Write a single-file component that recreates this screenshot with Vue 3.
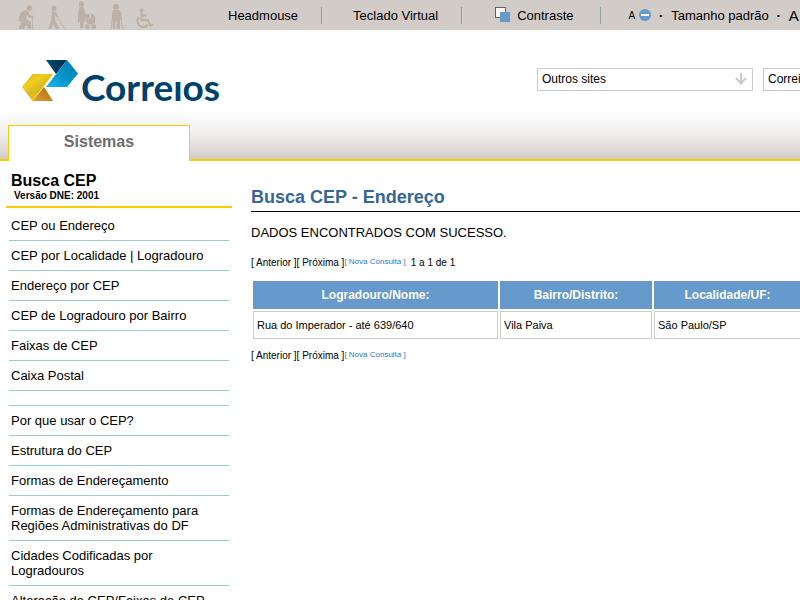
<script setup>
const searches = [
  'CEP ou Endereço',
  'CEP por Localidade | Logradouro',
  'Endereço por CEP',
  'CEP de Logradouro por Bairro',
  'Faixas de CEP',
  'Caixa Postal',
]
const guides = [
  'Por que usar o CEP?',
  'Estrutura do CEP',
  'Formas de Endereçamento',
  'Formas de Endereçamento para Regiões Administrativas do DF',
  'Cidades Codificadas por Logradouros',
  'Alteração de CEP/Faixas de CEP',
]
const rows = [['Rua do Imperador - até 639/640', 'Vila Paiva', 'São Paulo/SP']]
</script>

<template>
  <div class="page">
    <nav class="access" aria-label="Acessibilidade">
      <svg class="people" viewBox="0 0 138 30" width="138" height="30" aria-hidden="true">
        <g fill="#bbb1a7">
          <circle cx="11.300" cy="8" r="2.800" />
          <path d="M8 10 Q2 11 1 18 L0.500 21 L3.500 22 L1 27 V29 H6 L8 25 L9.500 26 V29 H13 V22 L8 19 L9 15 L11 18 L16 17.500 L15 15.500 L12 15.500 L10 11 Z" />
          <circle cx="36" cy="8.300" r="2.600" />
          <path d="M34 11 L38 12 L40 16.500 L38.500 17 L36.500 15 L37 20 L41.500 29 H37.500 L34.500 23.500 L34 29 H30 L33.500 19.500 Z" />
          <circle cx="63.500" cy="4" r="2.700" />
          <path d="M61.500 7 H65.500 L67.500 14 L67 22 H65.500 V28 H62 V22 H60 V13 Z" />
          <path d="M73 13.500 V18.500 H67.500 Q67.500 24 73 24.500 Q77.500 24 77.500 19 Q77 14 73 13.500 Z" />
          <path d="M67.500 18.500 V14.500 Q69 13.500 71 14 L72 17.500 Z" />
          <circle cx="69.300" cy="26.700" r="2.500" />
          <circle cx="75.600" cy="26.700" r="2.500" />
          <circle cx="98" cy="6.700" r="3" />
          <path d="M95 10 H101 L103.500 13 V20 H102 V29 H98.500 V21 H97.500 V29 H95 V20 H94 V13 Z" />
          <circle cx="123.500" cy="10.300" r="2" />
        </g>
        <g fill="none" stroke="#bbb1a7" stroke-width="1">
          <path d="M14.500 29 V17.500 M39.500 16.500 L46.500 29 M94.500 14 L93.500 29 M102.500 14 L104.500 29" />
        </g>
        <g fill="none" stroke="#bbb1a7" stroke-width="2">
          <path d="M123.500 12 V20 H130 L132.500 26 L135 24.500 M124 15.500 H128.500" />
          <path d="M121 17 A6 6 0 1 0 130 25" />
        </g>
      </svg>
      <a class="first" href="#headmouse">Headmouse</a>
      <i class="rule"></i>
      <a class="keyboard" href="#teclado">Teclado Virtual</a>
      <i class="rule"></i>
      <a class="contrast" href="#contraste">
        <svg viewBox="0 0 16 16" width="16" height="16" aria-hidden="true">
          <rect x="0.500" y="0.500" width="10" height="10" fill="#f8f8f8" stroke="#606060" />
          <rect x="5" y="5" width="10" height="10" fill="#6699cc" />
        </svg>
        Contraste
      </a>
      <i class="rule"></i>
      <button class="size smaller" type="button" aria-label="Diminuir texto">
        A
        <svg viewBox="0 0 12 12" width="12" height="12" aria-hidden="true">
          <circle cx="6" cy="6" r="6" fill="#6699cc" />
          <rect x="2" y="5" width="8" height="2" fill="#fff" />
        </svg>
      </button>
      <span class="dot">·</span>
      <button class="size" type="button">Tamanho padrão</button>
      <span class="dot">·</span>
      <button class="size larger" type="button">A</button>
    </nav>

    <header class="brand">
      <a class="logo" href="#inicio" aria-label="Correios">
        <svg viewBox="0 0 56 42" width="56" height="42" aria-hidden="true">
          <defs>
            <linearGradient id="gold" x1="0" y1="0" x2="0.700" y2="1">
              <stop offset="0" stop-color="#d9ab0c" />
              <stop offset="0.350" stop-color="#f0cf1c" />
              <stop offset="0.600" stop-color="#d9ba22" />
              <stop offset="1" stop-color="#ffc800" />
            </linearGradient>
            <linearGradient id="amber" x1="0" y1="1" x2="1" y2="0">
              <stop offset="0" stop-color="#dfa336" />
              <stop offset="1" stop-color="#b0660f" />
            </linearGradient>
            <linearGradient id="sky" x1="1" y1="0" x2="0" y2="1">
              <stop offset="0" stop-color="#0079ad" />
              <stop offset="0.550" stop-color="#0795ca" />
              <stop offset="1" stop-color="#16b8ee" />
            </linearGradient>
            <linearGradient id="navy" x1="0" y1="0" x2="1" y2="0">
              <stop offset="0" stop-color="#00507e" />
              <stop offset="1" stop-color="#002646" />
            </linearGradient>
          </defs>
          <path d="M24 0 H45 L34 14 Z" fill="url(#navy)" />
          <path d="M45 0 L56 13.500 L45 27 H24 Z" fill="url(#sky)" />
          <path d="M31 41 H10.500 L22 27 Z" fill="url(#amber)" />
          <path d="M10.500 14 H31 L10.500 41 L0 27 Z" fill="url(#gold)" />
        </svg>
        <span class="wordmark">Correıos</span>
      </a>
      <div class="pickers">
        <div class="picker">
          <select aria-label="Outros sites">
            <option>Outros sites</option>
          </select>
          <svg class="arrow" viewBox="0 0 12 12" width="12" height="12" aria-hidden="true">
            <path d="M6 0 V10 M1 5 L6 10.500 L11 5" fill="none" stroke="#c8cacc" stroke-width="2" />
          </svg>
        </div>
        <div class="picker">
          <select aria-label="Correios de A a Z">
            <option>Correios de A a Z</option>
          </select>
        </div>
      </div>
    </header>

    <div class="tabs"><a class="tab" href="#sistemas">Sistemas</a></div>

    <div class="columns">
      <aside class="side">
        <div class="side-head">
          <h2>Busca CEP</h2>
          <p>Versão DNE: 2001</p>
        </div>
        <ul class="menu">
          <li v-for="s in searches" :key="s"><a href="#busca">{{ s }}</a></li>
          <li class="blank"></li>
          <li v-for="g in guides" :key="g"><a href="#guia">{{ g }}</a></li>
        </ul>
      </aside>

      <main class="content">
        <h1>Busca CEP - Endereço</h1>
        <p class="status">DADOS ENCONTRADOS COM SUCESSO.</p>
        <div class="pager">
          <span>[ Anterior ][ Próxima ]</span><a href="#nova">[ Nova Consulta ]</a><span class="count">1 a 1 de 1</span>
        </div>
        <table>
          <colgroup>
            <col class="street" />
            <col class="district" />
            <col />
          </colgroup>
          <thead>
            <tr>
              <th scope="col">Logradouro/Nome:</th>
              <th scope="col">Bairro/Distrito:</th>
              <th scope="col">Localidade/UF:</th>
            </tr>
          </thead>
          <tbody>
            <tr v-for="(row, i) in rows" :key="i">
              <td v-for="cell in row" :key="cell">{{ cell }}</td>
            </tr>
          </tbody>
        </table>
        <div class="pager">
          <span>[ Anterior ][ Próxima ]</span><a href="#nova">[ Nova Consulta ]</a>
        </div>
      </main>
    </div>
  </div>
</template>

<style>
body {
  margin: 0;
  background: #fff;
}
</style>

<style scoped>
.page {
  overflow: hidden;
  font-family: "Liberation Sans", Arial, sans-serif;
  font-size: 13px;
  color: #000;
}
a {
  color: inherit;
  text-decoration: none;
}
h1, h2, p, ul {
  margin: 0;
  padding: 0;
}

.access {
  display: flex;
  align-items: center;
  height: 30px;
  padding-left: 18px;
  background: #d2ccc8;
  white-space: nowrap;
}
.access > * {
  flex: none;
}
.first {
  margin: 0 23px 0 72px;
}
.rule {
  width: 1px;
  height: 17px;
  border-left: 1px solid #919ca3;
}
.keyboard {
  margin: 0 23px 0 30px;
}
.contrast {
  display: flex;
  align-items: center;
  gap: 6px;
  margin: 0 26px 0 32px;
}
.size {
  display: flex;
  align-items: center;
  padding: 0;
  border: 0;
  background: none;
  font: inherit;
  color: inherit;
}
.smaller {
  gap: 4px;
  margin-left: 27px;
  font-size: 10px;
}
.larger {
  font-size: 15px;
}
.dot {
  width: 20px;
  font-weight: bold;
  text-align: center;
}

.brand {
  display: flex;
  justify-content: space-between;
  align-items: flex-start;
  height: 50px;
  padding: 30px 0 0 22px;
}
.logo {
  display: flex;
  align-items: flex-start;
  gap: 3px;
}
.wordmark {
  padding-top: 4px;
  font-family: Lato, sans-serif;
  font-size: 37px;
  font-weight: bold;
  line-height: 45px;
  color: #00416b;
}
.pickers {
  display: flex;
  gap: 10px;
  margin-right: -179px;
  padding-top: 8px;
}
.picker {
  position: relative;
  width: 216px;
}
select {
  display: block;
  width: 100%;
  height: 23px;
  padding: 0 4px 1px;
  border: 1px solid #c8cacc;
  border-radius: 0;
  background: #fff;
  appearance: none;
  font: 12px "Liberation Sans", Arial, sans-serif;
  color: #000;
}
.arrow {
  position: absolute;
  top: 5px;
  right: 6px;
  pointer-events: none;
}

.tabs {
  display: flex;
  height: 34px;
  padding: 15px 8px 0;
  border-bottom: 2px solid #ffcb05;
  background: linear-gradient(#fff, #f0eeed 50%, #d2ccc8);
}
.tab {
  width: 180px;
  height: 35px;
  border: 1px solid #ffcb05;
  border-bottom: 0;
  background: #fff;
  color: #6d6e70;
  font-size: 16px;
  font-weight: bold;
  line-height: 32px;
  text-align: center;
}

.columns {
  display: flex;
}
.side {
  flex: none;
  width: 226px;
  padding: 10px 19px 0 6px;
}
.side-head {
  padding: 0 5px 5px;
  border-bottom: 2px solid #ffcb05;
}
.side-head h2 {
  font-size: 16px;
  line-height: 19px;
}
.side-head p {
  padding-left: 3px;
  font-size: 10px;
  font-weight: bold;
  line-height: 11px;
}
.menu {
  margin: 3px 3px 0;
  list-style: none;
  line-height: 15px;
}
.menu li {
  padding: 7px 2px;
  border-bottom: 1px solid #99cccc;
}

.content {
  flex: 1;
  min-width: 0;
  padding-top: 24px;
}
h1 {
  padding-bottom: 2px;
  border-bottom: 1px solid #000;
  color: #336699;
  font-size: 18px;
  line-height: 24px;
}
.status {
  padding: 12px 0 15px;
  font-size: 13px;
  line-height: 18px;
}
.pager {
  display: flex;
  font-size: 10px;
  line-height: 12px;
}
.pager a {
  color: #2a7bd0;
  font-size: 8px;
  line-height: 10px;
}
.count {
  margin-left: 5px;
}
table {
  width: calc(100% + 3px);
  margin: 10px 0 9px;
  table-layout: fixed;
  border-collapse: separate;
  border-spacing: 2px;
}
.street {
  width: 245px;
}
.district {
  width: 152px;
}
th {
  height: 28px;
  padding: 0 3px;
  background: #6699cc;
  color: #fff;
  font-size: 12px;
}
td {
  height: 26px;
  padding: 0 3px;
  border: 1px solid #cccccc;
  font-size: 11px;
}
</style>
